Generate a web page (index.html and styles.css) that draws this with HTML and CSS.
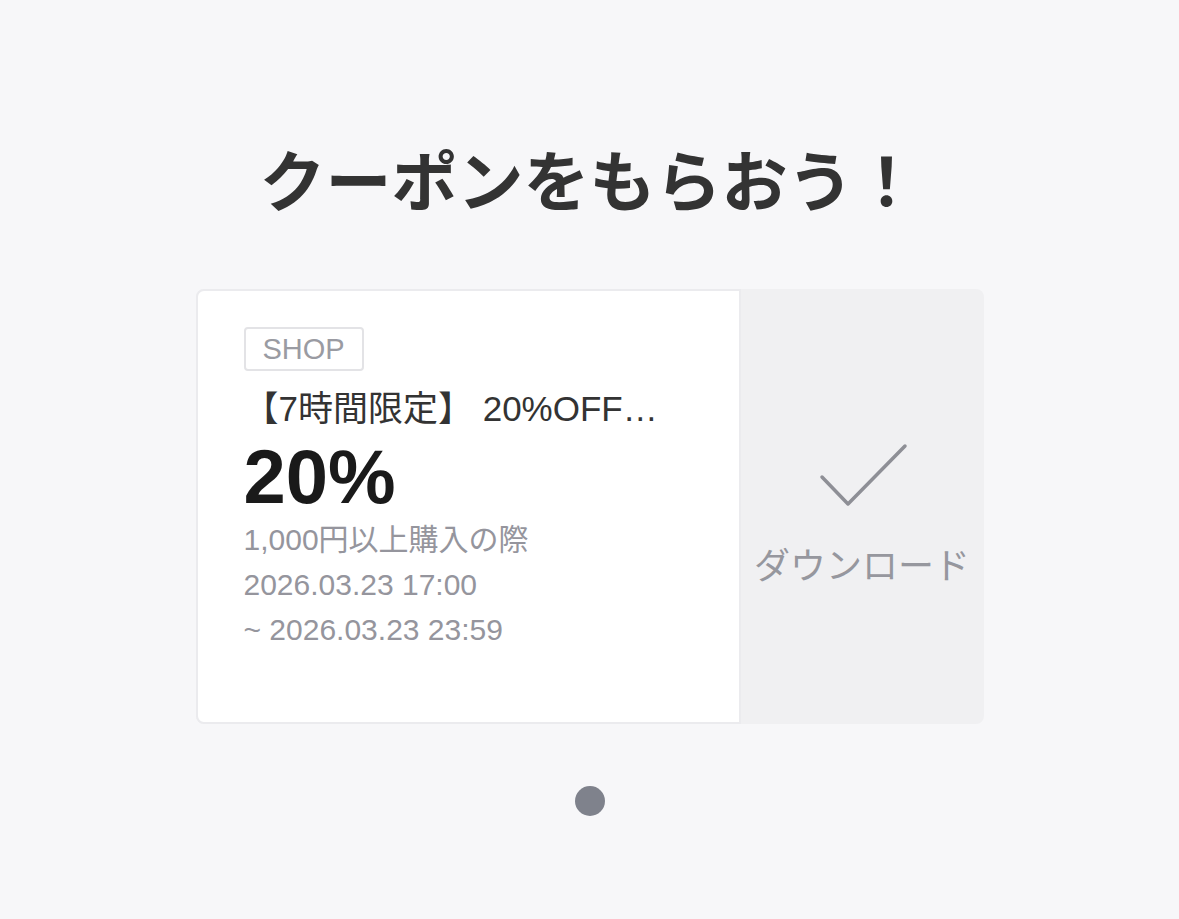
FILE: index.html
```html
<!DOCTYPE html>
<html lang="ja">
<head>
  <meta charset="UTF-8" />
  <meta name="viewport" content="width=device-width, initial-scale=1.0"/>
  <title>クーポン</title>
  <link rel="stylesheet" href="styles.css">
</head>
<body>
  <main class="page">
    <h1 class="page-title">クーポンをもらおう！</h1>

    <div class="coupon">
      <div class="coupon-info">
        <span class="coupon-tag">SHOP</span>
        <p class="coupon-name">【7時間限定】 20%OFF…</p>
        <p class="coupon-rate">20%</p>
        <p class="coupon-cond">1,000円以上購入の際</p>
        <p class="coupon-period">2026.03.23 17:00</p>
        <p class="coupon-period">~ 2026.03.23 23:59</p>
      </div>

      <div class="coupon-action">
        <svg class="check-icon" width="90" height="64" viewBox="0 0 90 64">
          <polyline points="3,34 29,61 86,3" fill="none" stroke="#8e8f96" stroke-width="3.5" stroke-linecap="round" stroke-linejoin="round"/>
        </svg>
        <span class="action-label">ダウンロード</span>
      </div>
    </div>

    <div class="pager">
      <span class="pager-dot"></span>
    </div>
  </main>
</body>
</html>
```

FILE: styles.css
```css
body {
  margin: 0;
  background: #f7f7f9;
  color: #333;
  font-family: 'Liberation Sans', 'Noto Sans CJK JP', sans-serif;
}

.page {
  display: flex;
  flex-direction: column;
  align-items: center;
  padding-top: 139px;
}

.page-title {
  margin: 0 0 74px;
  font-family: 'Noto Sans CJK JP', sans-serif;
  font-size: 66px;
  font-weight: bold;
  line-height: 76px;
  color: #333;
}

.coupon {
  display: flex;
  width: 788px;
  height: 435px;
  background: #f0f0f2;
  border-radius: 8px;
}

.coupon-info {
  box-sizing: border-box;
  width: 545px;
  padding: 36px 46px 0;
  background: white;
  border: 2px solid #ebebee;
  border-radius: 8px 0 0 8px;
}

.coupon-tag {
  display: inline-block;
  padding: 0 17px;
  line-height: 40px;
  font-size: 29px;
  color: #9a9ba2;
  border: 2px solid #e3e3e6;
  border-radius: 4px;
}

.coupon-name {
  margin: 18px 0 0;
  font-size: 35px;
  line-height: 40px;
  color: #333;
  white-space: nowrap;
}

.coupon-rate {
  margin: 8px 0 0;
  font-size: 76px;
  font-weight: bold;
  line-height: 80px;
  color: #1a1a1a;
}

.coupon-cond,
.coupon-period {
  margin: 0;
  font-size: 30px;
  line-height: 45px;
  color: #95959d;
}

.coupon-action {
  flex: 1;
  display: flex;
  flex-direction: column;
  align-items: center;
  justify-content: center;
  gap: 38px;
  padding-top: 19px;
}

.check-icon {
  display: block;
  margin-left: 4px;
}

.action-label {
  font-size: 36px;
  line-height: 44px;
  color: #96979e;
}

.pager {
  display: flex;
  justify-content: center;
  margin-top: 62px;
}

.pager-dot {
  width: 30px;
  height: 30px;
  border-radius: 50%;
  background: #7f828c;
}
```
